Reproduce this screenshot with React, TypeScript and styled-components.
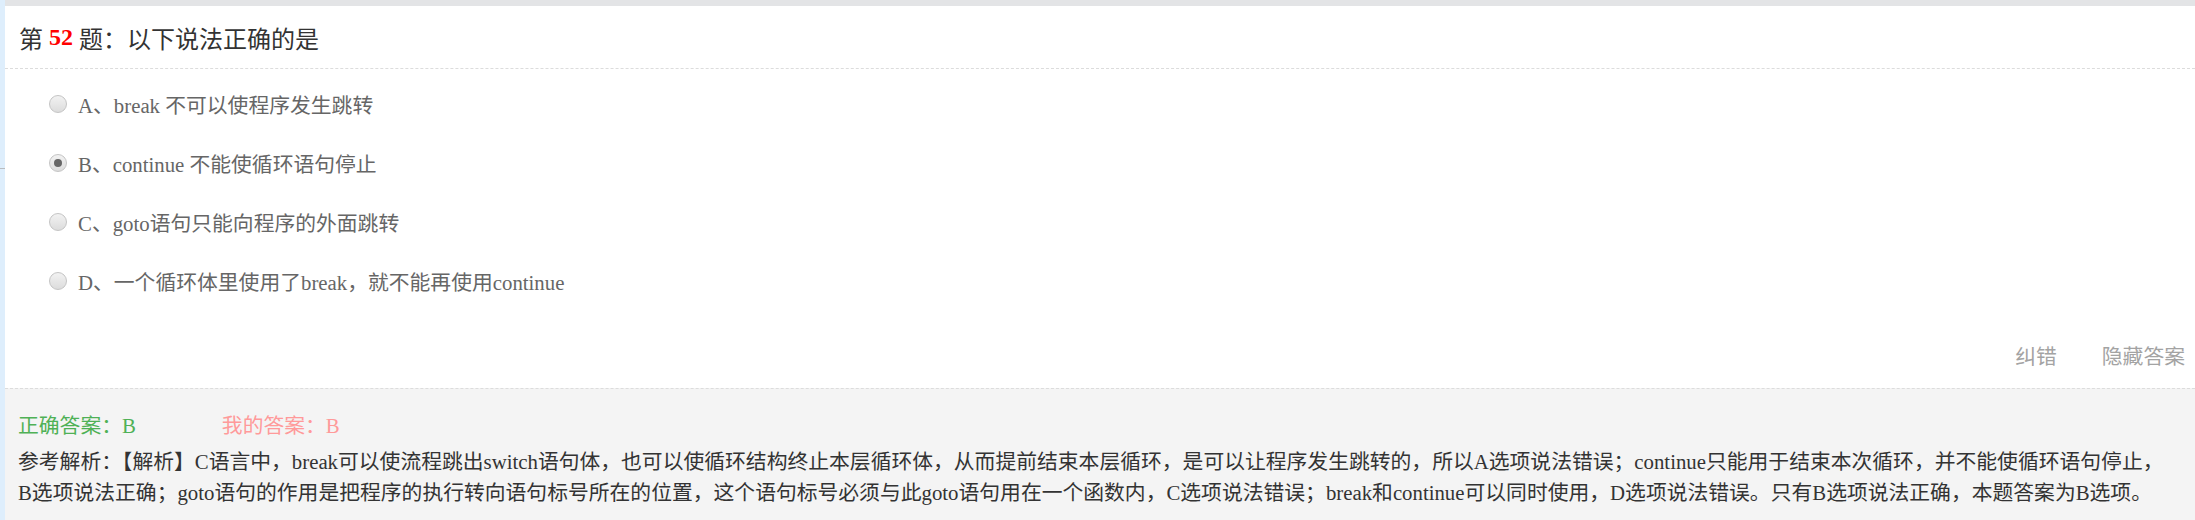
import React from 'react';
import styled, { createGlobalStyle } from 'styled-components';

const GlobalStyle = createGlobalStyle`
  html, body {
    margin: 0;
    padding: 0;
    background: #fff;
  }

  body {
    font-family: 'Liberation Serif', 'Noto Sans CJK SC', serif;
  }
`;

const Page = styled.div`
  display: flex;
  height: 520px;
  overflow: hidden;
  width: 2195px;
`;

const SideStrip = styled.div`
  background: #deeefc;
  flex: 0 0 5px;
`;

const SideTick = styled.div`
  background: #b9bcc0;
  height: 1px;
  margin-top: 168px;
`;

const Main = styled.div`
  display: flex;
  flex: 1;
  flex-direction: column;
  min-width: 0;
`;

const TopBar = styled.div`
  background: #e3e4e6;
  height: 6px;
`;

const Title = styled.div`
  align-items: center;
  border-bottom: 1px dashed #dcdcdc;
  color: #333;
  display: flex;
  font-size: 24px;
  height: 62px;
  padding-left: 14px;
  white-space: pre;
`;

const QuestionNo = styled.span`
  color: #f00;
  font-weight: bold;
`;

const OptionList = styled.div`
  display: flex;
  flex-direction: column;
  padding: 5px 0 0 44px;
`;

const OptionRow = styled.label`
  align-items: center;
  color: #666;
  display: flex;
  font-size: 20.8px;
  gap: 11px;
  height: 59px;
`;

const Radio = styled.span<{ $checked?: boolean }>`
  align-items: center;
  background: linear-gradient(to bottom, #f2f2f2, #dcdcdc);
  border: 1px solid #c4c4c4;
  border-radius: 50%;
  box-sizing: border-box;
  display: flex;
  flex: 0 0 18px;
  height: 18px;
  justify-content: center;

  &::after {
    background: ${({ $checked }) => ($checked ? '#666' : 'transparent')};
    border-radius: 50%;
    content: '';
    height: 8px;
    width: 8px;
  }
`;

const Actions = styled.div`
  align-items: center;
  box-sizing: border-box;
  color: #a3a3a3;
  display: flex;
  font-size: 20.8px;
  gap: 45px;
  height: 78px;
  justify-content: flex-end;
  padding: 12px 10px 0 0;
`;

const ActionLink = styled.span`
  cursor: pointer;
`;

const AnswerBox = styled.div`
  background: #f4f4f4;
  border-top: 1px dashed #dcdcdc;
  display: flex;
  flex: 1;
  flex-direction: column;
  font-size: 20.8px;
  padding: 22px 13px 0;
`;

const AnswerRow = styled.div`
  display: flex;
  gap: 86px;
  line-height: 30px;
`;

const Answer = styled.span<{ $tone: 'right' | 'mine' }>`
  color: ${({ $tone }) => ($tone === 'right' ? '#4fb156' : '#ff9a9a')};
`;

const Analysis = styled.p`
  color: #333;
  line-height: 31px;
  margin: 5px 0 0;
`;

const options = [
  { key: 'A', text: 'break 不可以使程序发生跳转' },
  { key: 'B', text: 'continue 不能使循环语句停止', checked: true },
  { key: 'C', text: 'goto语句只能向程序的外面跳转' },
  { key: 'D', text: '一个循环体里使用了break，就不能再使用continue' },
];

export default function App() {
  return (
    <>
      <GlobalStyle />
      <Page>
        <SideStrip>
          <SideTick />
        </SideStrip>
        <Main>
          <TopBar />
          <Title>
            第 <QuestionNo>52</QuestionNo> 题：以下说法正确的是
          </Title>
          <OptionList>
            {options.map((o) => (
              <OptionRow key={o.key}>
                <Radio $checked={o.checked} />
                <span>
                  {o.key}、{o.text}
                </span>
              </OptionRow>
            ))}
          </OptionList>
          <Actions>
            <ActionLink>纠错</ActionLink>
            <ActionLink>隐藏答案</ActionLink>
          </Actions>
          <AnswerBox>
            <AnswerRow>
              <Answer $tone="right">正确答案：B</Answer>
              <Answer $tone="mine">我的答案：B</Answer>
            </AnswerRow>
            <Analysis>
              参考解析：【解析】C语言中，break可以使流程跳出switch语句体，也可以使循环结构终止本层循环体，从而提前结束本层循环，是可以让程序发生跳转的，所以A选项说法错误；continue只能用于结束本次循环，并不能使循环语句停止，
              <br />
              B选项说法正确；goto语句的作用是把程序的执行转向语句标号所在的位置，这个语句标号必须与此goto语句用在一个函数内，C选项说法错误；break和continue可以同时使用，D选项说法错误。只有B选项说法正确，本题答案为B选项。
            </Analysis>
          </AnswerBox>
        </Main>
      </Page>
    </>
  );
}
